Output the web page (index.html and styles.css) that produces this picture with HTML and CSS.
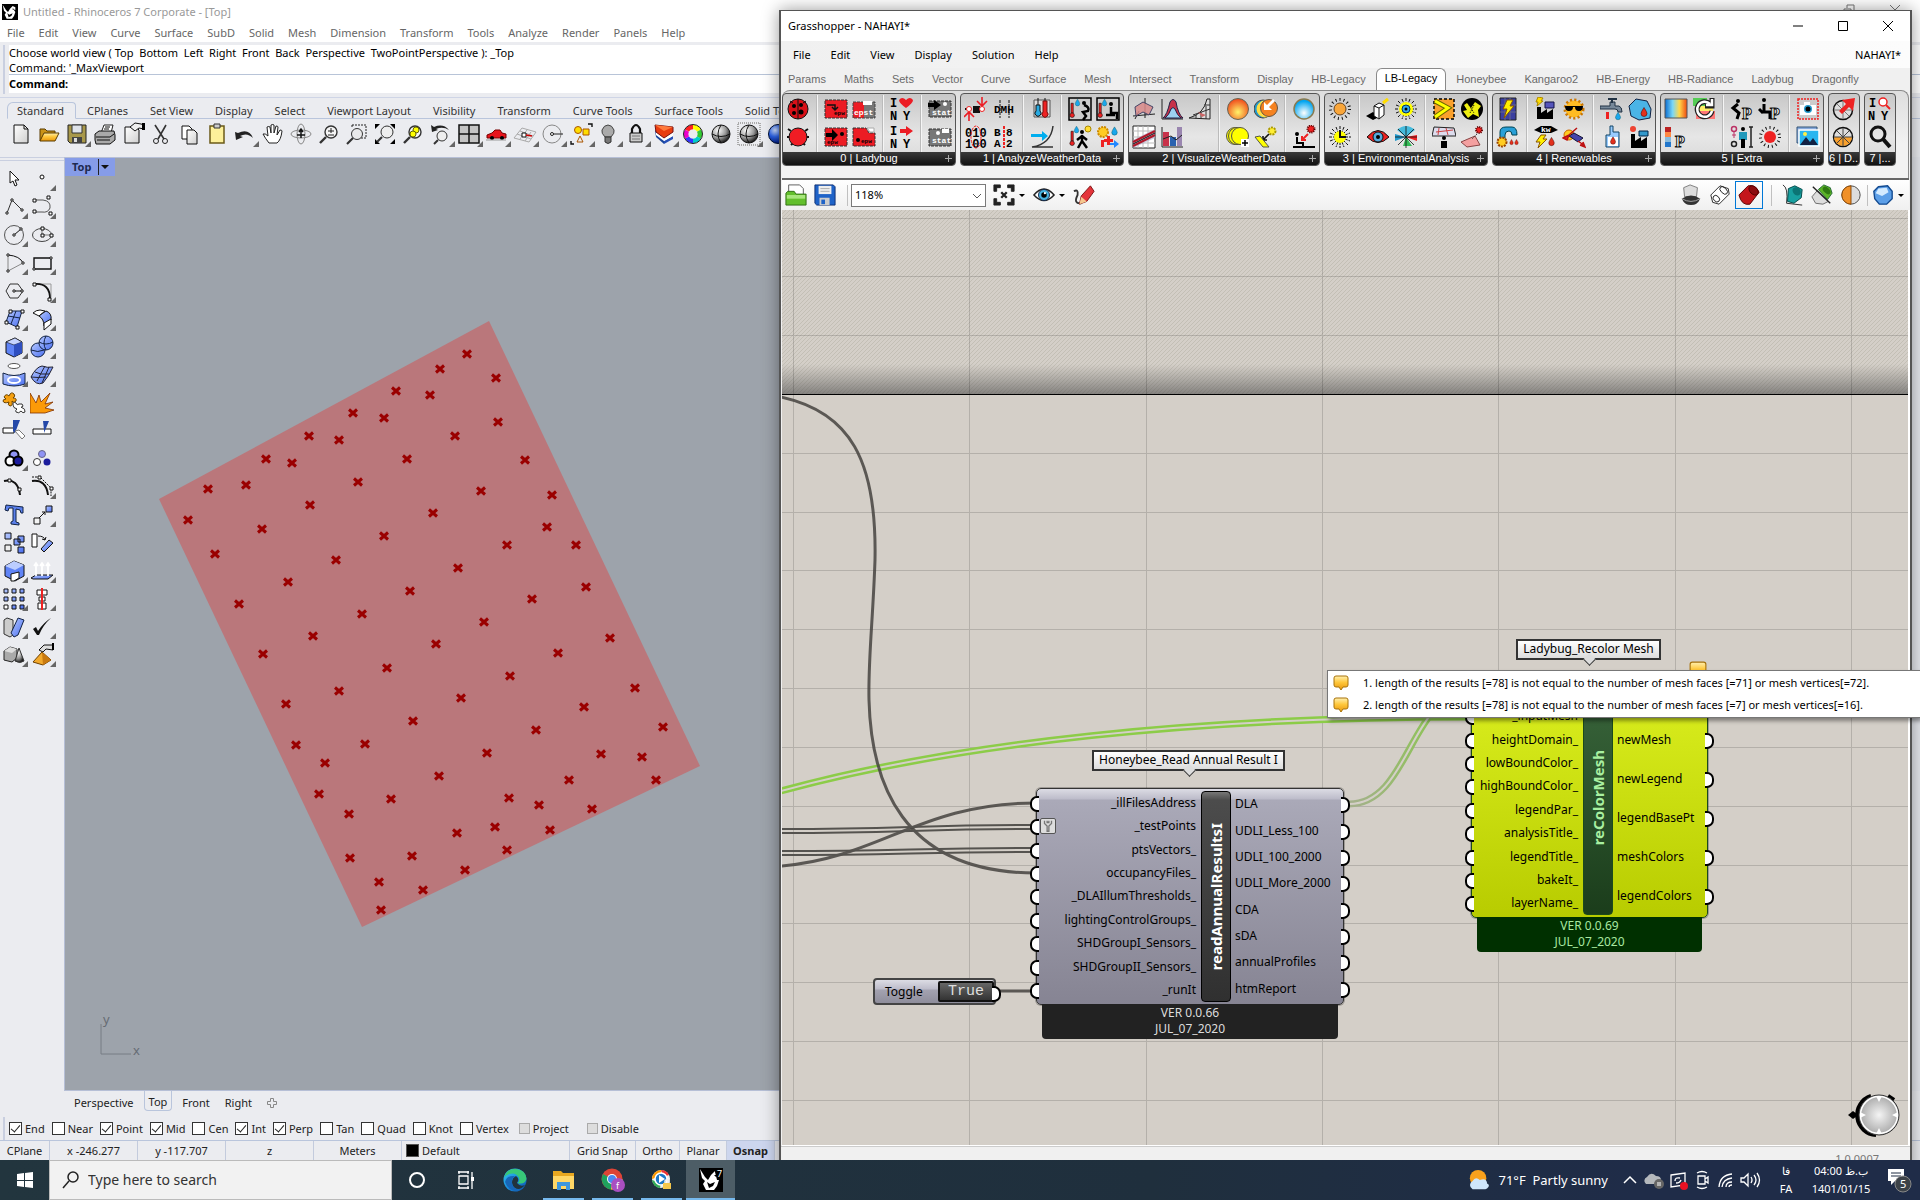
FILE: index.html
```html
<!DOCTYPE html>
<html lang="en">
<head>
<meta charset="utf-8">
<title>Untitled - Rhinoceros 7 Corporate - [Top]</title>
<link rel="stylesheet" href="styles.css">
</head>
<body>
<svg class="defs" aria-hidden="true">
  <defs>
    <linearGradient id="blue" x1="0" y1="0" x2="1" y2="1"><stop offset="0" stop-color="#b5c8ff"/><stop offset="1" stop-color="#4a6ff0"/></linearGradient>
    <linearGradient id="gold" x1="0" y1="0" x2="0" y2="1"><stop offset="0" stop-color="#fff0b0"/><stop offset=".45" stop-color="#ffc83c"/><stop offset="1" stop-color="#e8960c"/></linearGradient>
    <linearGradient id="paper" x1="0" y1="0" x2="1" y2="1"><stop offset="0" stop-color="#fff"/><stop offset="1" stop-color="#cfcfcf"/></linearGradient>
    <radialGradient id="gball" cx=".35" cy=".3" r=".7"><stop offset="0" stop-color="#fff"/><stop offset=".6" stop-color="#999"/><stop offset="1" stop-color="#222"/></radialGradient>
    <radialGradient id="bball" cx=".35" cy=".3" r=".7"><stop offset="0" stop-color="#cfe0ff"/><stop offset=".5" stop-color="#2c63e8"/><stop offset="1" stop-color="#001a80"/></radialGradient>
    <radialGradient id="knob"><stop offset="0" stop-color="#f4f4f4"/><stop offset="1" stop-color="#a8a8a8"/></radialGradient>
    <radialGradient id="hot" cx=".5" cy=".65" r=".6"><stop offset="0" stop-color="#fff46a"/><stop offset="1" stop-color="#f0501e"/></radialGradient>
    <radialGradient id="cool" cx=".5" cy=".7" r=".6"><stop offset="0" stop-color="#fff"/><stop offset="1" stop-color="#00a4f0"/></radialGradient>
    <linearGradient id="rain"><stop offset="0" stop-color="#0a6cd0"/><stop offset=".35" stop-color="#7ad8f8"/><stop offset=".65" stop-color="#ffd84a"/><stop offset="1" stop-color="#f04a10"/></linearGradient>
    <linearGradient id="edge" x1="0" y1="0" x2="1" y2="1"><stop offset="0" stop-color="#36c5f0"/><stop offset=".5" stop-color="#1a8fe0"/><stop offset="1" stop-color="#0c4fa8"/></linearGradient>
    <pattern id="hatch" width="4" height="4" patternUnits="userSpaceOnUse"><path d="M-1 1l2-2M0 4l4-4M3 5l2-2" stroke="#c3bfb5" stroke-width="1"/></pattern>
    <linearGradient id="shade" x1="0" y1="0" x2="0" y2="1"><stop offset="0" stop-color="#555" stop-opacity="0"/><stop offset="1" stop-color="#444" stop-opacity=".55"/></linearGradient>
    <linearGradient id="fade"><stop offset="0" stop-color="#a5b08e"/><stop offset="1" stop-color="#82cc3c"/></linearGradient>
    <marker id="x" viewBox="-5 -5 10 10" markerWidth="10" markerHeight="10" markerUnits="userSpaceOnUse"><path d="M-4-3.500L4 3.500M4-3.500L-4 3.500" stroke="#9a0000" stroke-width="3"/></marker>
    <symbol id="ball" viewBox="0 0 24 24"><circle cx="12" cy="12" r="9" fill="url(#gball)" stroke="#111"/><path d="M3 12q9 5 18 0M12 3q-6 9 0 18" fill="none" stroke="#111"/></symbol>
    <symbol id="lens" viewBox="0 0 24 24"><circle cx="14" cy="10" r="6" fill="#f5f5f5" stroke="#333" stroke-width="1.4"/><path d="M9 15l-6 6" stroke="#333" stroke-width="2.4"/></symbol>
    <symbol id="sun" viewBox="0 0 24 24"><path d="M12 1v22M1 12h22M4 4l16 16M20 4L4 20M8 2l8 20M16 2L8 22M2 8l20 8M2 16l20-8" stroke="#111" stroke-width="1" stroke-dasharray="3 1"/></symbol>
    <symbol id="note" viewBox="0 0 16 16"><path d="M3 1h10q2 0 2 2v7q0 2-2 2h-3l-2 3-2-3H3q-2 0-2-2V3q0-2 2-2z" fill="url(#gold)" stroke="#a8730a"/></symbol>
    <symbol id="drop" viewBox="0 0 24 24"><path d="M12 3q6 9 6 12a6 6 0 0 1-12 0q0-3 6-12z" fill="#1aa7ec" stroke="#056"/></symbol>
    <symbol id="flame" viewBox="0 0 24 24"><path d="M12 3q6 9 6 12a6 6 0 0 1-12 0q0-3 6-12z" fill="#e2301c" stroke="#300"/></symbol>
    <symbol id="therm" viewBox="0 0 8 24"><path d="M2 3h3v13h-3z" fill="#e22" stroke="#111" stroke-width=".8"/><circle cx="3.500" cy="19" r="3" fill="#e22" stroke="#111" stroke-width=".8"/></symbol>
    <symbol id="logo" viewBox="0 0 24 24"><path d="M0 0h24v24H0z" fill="#000"/><path d="M1 1l2 9 3 3-2 3 3 6 8 0 3-4 2-6-3-4 3 1 0-4-4-2-4 4-3 5-3-3z" fill="#fff"/><path d="M8 14l3 2 5-2-2 4-4 2zM15 7l3 0-1 2z" fill="#000"/></symbol>
  </defs>
</svg>

<main class="desktop">
<section class="rhino">
  <header class="r-title"><svg class="i16"><use href="#logo"/></svg><span>Untitled - Rhinoceros 7 Corporate - [Top]</span>
    <svg class="r-ctl" viewBox="0 0 110 16"><path d="M6 7h10M51 5h7v8h-7zM54 4V1h7v8h-3M97 1l10 10M107 1L97 11" fill="none" stroke="#777"/></svg>
  </header>
  <nav class="r-menu"><button>File</button><button>Edit</button><button>View</button><button>Curve</button><button>Surface</button><button>SubD</button><button>Solid</button><button>Mesh</button><button>Dimension</button><button>Transform</button><button>Tools</button><button>Analyze</button><button>Render</button><button>Panels</button><button>Help</button></nav>
  <div class="r-cmd">
    <pre>Choose world view ( Top  Bottom  Left  Right  Front  Back  Perspective  TwoPointPerspective ): _Top
Command: '_MaxViewport</pre>
    <div class="r-prompt"><label for="cmd">Command:</label><input id="cmd" type="text"></div>
  </div>
  <div class="r-bar">
    <div class="r-tabs"><button class="on">Standard</button><button>CPlanes</button><button>Set View</button><button>Display</button><button>Select</button><button>Viewport Layout</button><button>Visibility</button><button>Transform</button><button>Curve Tools</button><button>Surface Tools</button><button>Solid Tools</button></div>
    <div class="r-tools">
      <button aria-label="New"><svg viewBox="0 0 24 24"><path d="M5 3h10l4 4v14H5z" fill="url(#paper)" stroke="#111"/><path d="M15 3v4h4" fill="none" stroke="#111"/></svg></button>
      <button aria-label="Open"><svg viewBox="0 0 24 24"><path d="M3 19V7h5l2 2h8v3" fill="#c99318" stroke="#5a3c00"/><path d="M3 19l4-8h15l-4 8z" fill="url(#gold)" stroke="#5a3c00"/></svg></button>
      <button class="d" aria-label="Save"><svg viewBox="0 0 24 24"><path d="M3 3h18v18H5l-2-2z" fill="#a8984a" stroke="#222"/><path d="M7 3h10v8H7z" fill="#dfe3ea" stroke="#333"/><path d="M7 15h10v6H7z" fill="#444"/><path d="M9 16h3v4H9z" fill="#ddd"/></svg></button>
      <button aria-label="Print"><svg viewBox="0 0 24 24"><path d="M8 11l3-8h9l-2 8z" fill="#fff" stroke="#222"/><path d="M2 12l4-3h15l1 4v5l-5 4H3l-1-4z" fill="#aaa" stroke="#111"/><path d="M3 15h14l4-3M4 18h13M12 5h5M11 7h5" fill="none" stroke="#111"/></svg></button>
      <button aria-label="Properties"><svg viewBox="0 0 24 24"><path d="M4 5h11l3 3v13H4z" fill="url(#paper)" stroke="#111"/><path d="M9 5l5-4 6 1 3 1v4l-5-1-4 3z" fill="#eee" stroke="#111"/><path d="M21 1h3v7h-3z"/></svg></button>
      <button aria-label="Cut"><svg viewBox="0 0 24 24"><path d="M6 3l9 14M17 3L9 17" stroke="#333" stroke-width="1.600"/><circle cx="7" cy="19" r="2.500" fill="none" stroke="#222"/><circle cx="16" cy="19" r="2.500" fill="none" stroke="#222"/></svg></button>
      <button aria-label="Copy"><svg viewBox="0 0 24 24"><path d="M5 4h7l3 3v10H5z" fill="#fff" stroke="#111"/><path d="M10 8h7l3 3v11H10z" fill="url(#paper)" stroke="#111"/></svg></button>
      <button aria-label="Paste"><svg viewBox="0 0 24 24"><path d="M5 4h14v17H5z" fill="#fdf09a" stroke="#6b5a18" stroke-width="1.500"/><path d="M9 2h6v4H9z" fill="#ccc" stroke="#333"/></svg></button>
      <button class="d" aria-label="Undo"><svg viewBox="0 0 24 24"><path d="M2 10l1 8 7-3-3-1q7-4 13 2Q16 6 5 11z" fill="#222"/></svg></button>
      <button aria-label="Pan"><svg viewBox="0 0 24 24"><path d="M8 21q-4-5-6-9 2-1 5 2L6 5q2-1 3 0l1 6V3q2-1 3 0v8l2-7q2 0 2 1l-1 8 3-5q2 0 2 1-1 9-5 12z" fill="#fff" stroke="#222"/></svg></button>
      <button aria-label="Rotate view"><svg viewBox="0 0 24 24"><ellipse cx="12" cy="12" rx="10" ry="4" fill="none" stroke="#888"/><ellipse cx="12" cy="12" rx="4" ry="10" fill="none" stroke="#888"/><path d="M12 8v8M8 13h8M10 10l2-3 2 3" fill="none" stroke="#111" stroke-width="1.500"/></svg></button>
      <button aria-label="Zoom dynamic"><svg viewBox="0 0 24 24"><use href="#lens"/><path d="M11 9h6M14 6v5M11 13h6" stroke="#222"/></svg></button>
      <button aria-label="Zoom window"><svg viewBox="0 0 24 24"><path d="M7 3h14v13h-5M7 3v3" fill="none" stroke="#222" stroke-dasharray="2 1"/><circle cx="12" cy="12" r="5.500" fill="#e9e9ea" stroke="#333"/><path d="M8 16l-6 6" stroke="#333" stroke-width="2.200"/></svg></button>
      <button aria-label="Zoom extents"><svg viewBox="0 0 24 24"><path d="M2 2h5L2 7zM22 2h-5l5 5zM2 22h5l-5-5zM22 22h-5l5-5z"/><circle cx="14" cy="10" r="6" fill="#eee" stroke="#333"/><path d="M9 15l-5 5" stroke="#333" stroke-width="2.200"/></svg></button>
      <button aria-label="Zoom selected"><svg viewBox="0 0 24 24"><use href="#lens"/><circle cx="15" cy="8" r="3" fill="#ff0" stroke="#660"/><circle cx="12" cy="12" r="3" fill="#ff0" stroke="#660"/></svg></button>
      <button class="d" aria-label="Undo view"><svg viewBox="0 0 24 24"><path d="M2 3l1 7 6-2-2-1q7-3 13 1Q14 1 5 5z" fill="#222"/><circle cx="13" cy="14" r="5" fill="#eee" stroke="#333"/><path d="M9 18l-4 4" stroke="#333" stroke-width="2"/></svg></button>
      <button class="d" aria-label="Four viewports"><svg viewBox="0 0 24 24"><path d="M2 3h20v18H2z" fill="#c4c4c4" stroke="#111" stroke-width="1.500"/><path d="M12 3v18M2 12h20" stroke="#111" stroke-width="1.500"/></svg></button>
      <button class="d" aria-label="Named view"><svg viewBox="0 0 24 24"><path d="M2 13l5-2 3-3h5l2 3 4 1v4H2z" fill="#e8141c" stroke="#700"/><circle cx="7" cy="16" r="2"/><circle cx="17" cy="16" r="2"/><path d="M1 18h20" stroke="#999"/></svg></button>
      <button class="d" aria-label="CPlane"><svg viewBox="0 0 24 24"><path d="M1 16L9 6l14 4-7 10zM4 12l14 5M7 9l13 5M7 17l7-9M12 19l6-9" fill="none" stroke="#aaa"/><path d="M9 11h4v4H9z" stroke="#111" fill="#fff"/><path d="M13 13l6 1" stroke="#c00" stroke-width="1.500"/></svg></button>
      <button class="d" aria-label="Osnap"><svg viewBox="0 0 24 24"><circle cx="11" cy="12" r="9" fill="none" stroke="#888"/><circle cx="11" cy="12" r="1.500" fill="#fff" stroke="#222"/><path d="M12 12h10" stroke="#222"/></svg></button>
      <button class="d" aria-label="Select"><svg viewBox="0 0 24 24"><circle cx="9" cy="8" r="3.500" fill="#fd0" stroke="#a50"/><path d="M14 7h6v6h-6z" fill="#fd0" stroke="#a50"/><path d="M11 14l3 6H8z" fill="#eee" stroke="#a50"/><path d="M19 2h4v3M5 22H2v-3" fill="none" stroke="#111" stroke-width="1.400"/></svg></button>
      <button class="d" aria-label="Hide"><svg viewBox="0 0 24 24"><path d="M8 15q-4-4-3-7 2-5 6-5t6 5q1 3-3 7z" fill="#aaa" stroke="#444"/><path d="M8 15h6v5q-3 3-6 0z" fill="#777" stroke="#333"/></svg></button>
      <button class="d" aria-label="Lock"><svg viewBox="0 0 24 24"><path d="M7 11V7q4-8 8 0v4" fill="none" stroke="#111" stroke-width="2.200"/><path d="M5 11h12v9H5z" fill="#ccc" stroke="#111"/><path d="M7 14h8M7 17h8" stroke="#777"/></svg></button>
      <button class="d" aria-label="Layers"><svg viewBox="0 0 24 24"><path d="M2 8l9 4v10L3 15z" fill="#19469c"/><path d="M11 19l9-5v3l-9 5z" fill="#2750b8"/><path d="M3 10l8 5 9-4v3l-9 5-8-6z" fill="#fff"/><path d="M2 3l18 2v5l-9 6-8-6z" fill="#e83c10" stroke="#711"/><path d="M2 3l18 2-9 4z" fill="#ff7a3c"/></svg></button>
      <button class="d" aria-label="Colour"><svg viewBox="0 0 24 24"><g fill="none" stroke-width="4.500"><path d="M12 5a7 7 0 0 1 6 3.500" stroke="#ff0"/><path d="M18 8.500a7 7 0 0 1 0 7" stroke="#3c3"/><path d="M18 15.500a7 7 0 0 1-6 3.500" stroke="#0cc"/><path d="M12 19a7 7 0 0 1-6-3.500" stroke="#33f"/><path d="M6 15.500a7 7 0 0 1 0-7" stroke="#e0c"/><path d="M6 8.500A7 7 0 0 1 12 5" stroke="#f22"/></g><circle cx="12" cy="12" r="9.500" fill="none" stroke="#222"/></svg></button>
      <button aria-label="Shaded"><svg viewBox="0 0 24 24"><use href="#ball"/></svg></button>
      <button class="d" aria-label="Shade options"><svg viewBox="0 0 24 24"><path d="M1 1h22v22H1z" fill="none" stroke="#aaa" stroke-width="2" stroke-dasharray="1 1"/><use href="#ball"/></svg></button>
      <button aria-label="Rendered"><svg viewBox="0 0 24 24"><circle cx="13" cy="12" r="9.500" fill="url(#bball)" stroke="#013"/></svg></button>
    </div>
  </div>
  <div class="r-body">
    <aside class="r-side">
      <button aria-label="Pointer"><svg viewBox="0 0 24 24"><path d="M8 4v12l3-2 2 5 2-1-2-5h4z" fill="#fff" stroke="#111"/></svg></button>
      <button class="d" aria-label="Point"><svg viewBox="0 0 24 24"><circle cx="12" cy="10" r="2" fill="#fff" stroke="#111"/></svg></button>
      <button class="d" aria-label="Polyline"><svg viewBox="0 0 24 24"><path d="M5 18L10 5l10 10" fill="none" stroke="#333"/><g fill="#fff" stroke="#111"><circle cx="5" cy="18" r="1.200"/><circle cx="10" cy="5" r="1.200"/><circle cx="20" cy="15" r="1.200"/></g></svg></button>
      <button class="d" aria-label="Curve"><svg viewBox="0 0 24 24"><path d="M4 5h9q8 1 7 8-2 5-8 4H4" fill="none" stroke="#555"/><path d="M3 4h3v3H3zM3 15h3v3H3zM17 1h3v3h-3zM19 17h3v3h-3z" fill="#fff" stroke="#111"/></svg></button>
      <button class="d" aria-label="Circle"><svg viewBox="0 0 24 24"><circle cx="12" cy="12" r="9.500" fill="none" stroke="#555"/><path d="M12 12l7-6" stroke="#111"/><circle cx="12" cy="12" r="1.200" fill="#fff" stroke="#111"/><circle cx="19" cy="6" r="1.200" fill="#fff" stroke="#111"/></svg></button>
      <button class="d" aria-label="Ellipse"><svg viewBox="0 0 24 24"><ellipse cx="12" cy="12" rx="9.500" ry="6.500" fill="none" stroke="#444"/><path d="M12 6v6h9" fill="none" stroke="#777"/><path d="M11 4h3v3h-3zM11 11h3v3h-3zM20 11h3v3h-3z" fill="#fff" stroke="#111"/></svg></button>
      <button class="d" aria-label="Arc"><svg viewBox="0 0 24 24"><path d="M6 4q12 1 15 8" fill="none" stroke="#111"/><path d="M6 4v16l15-8" fill="none" stroke="#888"/><g fill="#fff" stroke="#111"><circle cx="6" cy="4" r="1.200"/><circle cx="6" cy="20" r="1.200"/><circle cx="21" cy="12" r="1.200"/></g></svg></button>
      <button class="d" aria-label="Rectangle"><svg viewBox="0 0 24 24"><path d="M4 7h17v11H4z" fill="none" stroke="#111" stroke-width="1.400"/><circle cx="21" cy="7" r="1.200" fill="#fff" stroke="#111"/><circle cx="4" cy="18" r="1.200" fill="#fff" stroke="#111"/></svg></button>
      <button class="d" aria-label="Polygon"><svg viewBox="0 0 24 24"><path d="M8 5h8l5 7-5 7H8l-4-7z" fill="none" stroke="#333"/><path d="M12 12h8" stroke="#111"/><circle cx="12" cy="12" r="1.200" fill="#fff" stroke="#111"/><circle cx="20" cy="12" r="1.200" fill="#fff" stroke="#111"/></svg></button>
      <button class="d" aria-label="Fillet"><svg viewBox="0 0 24 24"><path d="M5 5h16v14" fill="none" stroke="#999"/><path d="M5 5q15-1 15 15" fill="none" stroke="#111" stroke-width="1.800"/><path d="M3 4h3v3H3zM18 19h3v3h-3z" fill="#fff" stroke="#111"/></svg></button>
      <button class="d" aria-label="Surface from points"><svg viewBox="0 0 24 24"><path d="M8 4h12l-5 16L4 15z" fill="url(#blue)" stroke="#124"/><path d="M6 9l12 2M14 4l-5 13" stroke="#124"/><path d="M7 3h3v3H7zM19 3h3v3h-3zM3 14h3v3H3zM14 19h3v3h-3z" fill="#fff" stroke="#111"/></svg></button>
      <button class="d" aria-label="Surface"><svg viewBox="0 0 24 24"><path d="M3 6q3-3 7-3l5 1-6 5z" fill="#fff" stroke="#111"/><path d="M9 9q4-3 7-5 6 2 5 9l-7 6q0-7-5-10z" fill="url(#blue)" stroke="#111"/><path d="M14 16l7-4v5l-7 6z" fill="#fff" stroke="#111"/></svg></button>
      <button class="d" aria-label="Box"><svg viewBox="0 0 24 24"><path d="M4 7l9-4 7 4v11l-8 4-8-4z" fill="#5f83f5" stroke="#111"/><path d="M4 7l9-4 7 4-8 3z" fill="#c6d4ff" stroke="#111" stroke-width=".6"/><path d="M12 10l8-3v11l-8 4z" fill="#2f4fc0"/></svg></button>
      <button class="d" aria-label="Boolean"><svg viewBox="0 0 24 24"><circle cx="8" cy="15" r="7" fill="url(#blue)" stroke="#124"/><circle cx="16" cy="8" r="7" fill="url(#blue)" stroke="#124"/><path d="M9 7q7 4 14 0M16 1q-4 7 0 14M1 15q7 3 13 0" fill="none" stroke="#124"/></svg></button>
      <button class="d" aria-label="Project"><svg viewBox="0 0 24 24"><ellipse cx="12" cy="3" rx="6" ry="2.500" fill="#fff" stroke="#555"/><path d="M1 10q11 5 22 0v11q-11 4-22 0z" fill="url(#blue)" stroke="#124"/><ellipse cx="12" cy="17" rx="6" ry="3" fill="none" stroke="#fff" stroke-width="2"/></svg></button>
      <button class="d" aria-label="Mesh"><svg viewBox="0 0 24 24"><path d="M1 14Q6 4 12 3q5 2 11 1-4 9-10 16-7 3-12-6z" fill="url(#blue)" stroke="#223"/><path d="M5 9q5 3 14 2M7 18q4-8 8-15M12 20l7-16M1 14q7 1 15 0" fill="none" stroke="#223"/></svg></button>
      <button aria-label="Join"><svg viewBox="0 0 24 24"><path d="M2 6q2-4 5-1 2-5 5-2 2 2-1 4 4 0 3 3-2 3-4 0 1 5-2 5-3-1-1-4-5 2-6-1 0-2 3-2z" fill="#f5a010" stroke="#6b4300"/><path d="M11 14q0-4 3-2 1 3 3 1 4-1 4 2-1 2-2 1 5 2 4 5-2 2-4-1-2 3-5 1-1-2 1-3-4-1-4-4z" fill="#fff" stroke="#333"/></svg></button>
      <button aria-label="Explode"><svg viewBox="0 0 24 24"><path d="M0 22V2l6 10 3-8 2 7 9-9-5 11 8-2-8 6 9 2-9 3z" fill="#fb9a08" stroke="#803000" stroke-width=".8"/></svg></button>
      <button aria-label="Trim"><svg viewBox="0 0 24 24"><path d="M1 9h11v5H1z" fill="#fff" stroke="#111"/><path d="M11 1h7l-5 13-2-2z" fill="#2448a8"/><path d="M13 12l7 8 3-3-6-6z" fill="#fff" stroke="#777"/></svg></button>
      <button aria-label="Split"><svg viewBox="0 0 24 24"><path d="M3 10h18v5H3z" fill="#fff" stroke="#111"/><path d="M13 2h6l-5 12v-3z" fill="#2448a8"/></svg></button>
      <button class="d" aria-label="Group"><svg viewBox="0 0 24 24"><g stroke="#000" stroke-width="2"><circle cx="12" cy="8" r="4.500" fill="#8f93f5"/><circle cx="8" cy="14" r="4.500" fill="#fff"/><circle cx="16" cy="14" r="4.500" fill="#1c1c9c"/></g></svg></button>
      <button aria-label="Ungroup"><svg viewBox="0 0 24 24"><circle cx="12" cy="7" r="3.500" fill="#8f93f5" stroke="#668"/><circle cx="7" cy="15" r="3.500" fill="#fff" stroke="#333"/><circle cx="17" cy="15" r="3.500" fill="#1c1c9c"/></svg></button>
      <button aria-label="Edit points"><svg viewBox="0 0 24 24"><path d="M2 6q14-3 16 14" fill="none" stroke="#111" stroke-width="2"/><path d="M6 4h3v3H6zM16 13h3v3h-3z" fill="#fff" stroke="#111"/></svg></button>
      <button class="d" aria-label="Control points"><svg viewBox="0 0 24 24"><path d="M2 6q14-2 16 14" fill="none" stroke="#111" stroke-width="2"/><path d="M2 2h8l11 11v8" fill="none" stroke="#111" stroke-dasharray="2 1"/><path d="M8 1h3v3H8zM20 12h3v3h-3z" fill="#fff" stroke="#111"/></svg></button>
      <button aria-label="Text"><svg viewBox="0 0 24 24"><path d="M4 2l17 2 0 6h-2l-1-3-4-1v13l3 1v2l-8-1v-2l2-1V5H7L6 8 3 7z" fill="#5b80ec" stroke="#124"/></svg></button>
      <button class="d" aria-label="Move"><svg viewBox="0 0 24 24"><path d="M16 3h6v6h-6z" fill="url(#blue)" stroke="#111"/><path d="M4 15h6v6H4z" fill="#f4f4f4" stroke="#111"/><path d="M9 15l6-6M12 9h3v3" fill="none" stroke="#111"/></svg></button>
      <button aria-label="Copy objects"><svg viewBox="0 0 24 24"><g fill="url(#blue)" stroke="#111"><path d="M3 2h6v6H3zM16 5h6v6h-6zM12 8h6v6h-6zM16 16h6v6h-6z"/></g><path d="M3 14h6v6H3z" fill="#eee" stroke="#111"/></svg></button>
      <button aria-label="Rotate"><svg viewBox="0 0 24 24"><path d="M2 3h5v13H2z" fill="#fff" stroke="#111"/><path d="M11 18l8-9 4 3-9 9z" fill="url(#blue)" stroke="#111"/><path d="M8 5q6 0 7 4M12 8l3 1 1-3" fill="none" stroke="#111"/></svg></button>
      <button class="d" aria-label="Solid edit"><svg viewBox="0 0 24 24"><path d="M3 7l9-5 10 4v11l-9 5-10-5z" fill="#5f83f5" stroke="#111"/><path d="M3 7l9-5 10 4-9 5z" fill="#bccdff"/><path d="M9 22v-7l8-2v6l-5 3z" fill="#fff" stroke="#111"/></svg></button>
      <button class="d" aria-label="Analyze direction"><svg viewBox="0 0 24 24"><path d="M1 19l5-3h17l-5 4H3z" fill="url(#blue)" stroke="#111"/><path d="M6 17V6M12 17V6M18 17V6M4 7l2-3 2 3M10 7l2-3 2 3M16 7l2-3 2 3" fill="none" stroke="#fff" stroke-width="1.800"/></svg></button>
      <button class="d" aria-label="Array"><svg viewBox="0 0 24 24"><g fill="url(#blue)" stroke="#111"><path d="M2 2h4v4H2zM10 2h4v4h-4zM18 2h4v4h-4zM2 10h4v4H2zM10 10h4v4h-4zM18 10h4v4h-4zM10 18h4v4h-4zM18 18h4v4h-4z"/></g><path d="M2 18h4v4H2z" fill="#fff" stroke="#111"/></svg></button>
      <button class="d" aria-label="Align"><svg viewBox="0 0 24 24"><path d="M7 3h10v5H7zM9 10h6v4H9zM8 16h8v6H8z" fill="#fff" stroke="#111"/><path d="M12 1v22" stroke="#e22" stroke-width="2"/></svg></button>
      <button class="d" aria-label="Flow"><svg viewBox="0 0 24 24"><path d="M2 5l3-2 6 2v15l-3 2-6-3z" fill="#ccc" stroke="#333"/><path d="M9 18l7-15 6 2-6 15-4 2z" fill="url(#blue)" stroke="#124"/></svg></button>
      <button class="d" aria-label="Check"><svg viewBox="0 0 24 24"><path d="M3 14l3-2 2 4Q14 7 21 3 13 10 9 20H7z" fill="#111"/></svg></button>
      <button class="d" aria-label="Solids"><svg viewBox="0 0 24 24"><path d="M2 8l6-4 7 2v9l-5 4-8-2z" fill="#aaa" stroke="#222"/><path d="M2 8l6-4 7 2-5 4z" fill="#ddd"/><path d="M17 5l5 13q-4 3-9 0z" fill="url(#gball)" stroke="#333"/></svg></button>
      <button class="d" aria-label="Render solid"><svg viewBox="0 0 24 24"><path d="M12 9l9 8-8 5-10-3z" fill="#f2a92c" stroke="#704000"/><path d="M12 9l9 8-8 5z" fill="#c97a10"/><path d="M9 7l5-5 9 0v5l-7-1-3 3z" fill="#ddd" stroke="#111"/><path d="M22 0h2v7h-2z"/></svg></button>
    </aside>
    <div class="r-view">
      <svg class="fill"><g transform="translate(-65 -158)">
        <path d="M159 499L489 321L700 766L362 927z" fill="#ba777b"/>
        <path fill="none" marker-start="url(#x)" marker-mid="url(#x)" marker-end="url(#x)" d="M467 354L440 369 496 378 396 391 430 395 353 413 384 418 498 422 455 436 309 436 339 440 266 459 292 463 407 459 525 460 358 482 481 491 552 495 246 485 208 489 310 505 433 513 547 527 188 520 262 529 384 536 507 545 576 545 215 554 336 560 458 568 288 582 586 587 410 591 532 599 239 604 362 614 484 622 313 636 610 638 436 644 558 653 263 654 387 668 510 676 635 688 339 691 461 698 286 704 584 707 413 721 663 727 536 730 365 744 296 745 487 753 601 754 642 757 325 763 439 776 656 780 569 780 319 794 509 798 391 799 539 805 592 809 349 814 495 827 550 830 457 833 507 850 412 856 350 858 465 870 379 882 423 890 381 910"/>
        <path d="M101 1024v30h30" fill="none" stroke="#777d84"/>
        <text x="103" y="1024" class="axis">y</text><text x="133" y="1055" class="axis">x</text></g></svg>
      <button class="r-vp"><span>Top</span><i></i></button>
    </div>
    <aside class="r-dock"></aside>
  </div>
  <div class="r-vtabs"><button>Perspective</button><button class="on">Top</button><button>Front</button><button>Right</button><button aria-label="Add"><svg width="10" height="10" viewBox="0 0 10 10"><path d="M3.500.500h3v3h3v3h-3v3h-3v-3h-3v-3h3z" fill="none" stroke="#888"/></svg></button></div>
  <div class="r-snap">
    <label><input type="checkbox" checked>End</label><label><input type="checkbox">Near</label><label><input type="checkbox" checked>Point</label><label><input type="checkbox" checked>Mid</label><label><input type="checkbox">Cen</label><label><input type="checkbox" checked>Int</label><label><input type="checkbox" checked>Perp</label><label><input type="checkbox">Tan</label><label><input type="checkbox">Quad</label><label><input type="checkbox">Knot</label><label><input type="checkbox">Vertex</label><label class="off"><input type="checkbox" disabled>Project</label><label class="off"><input type="checkbox" disabled>Disable</label>
  </div>
  <div class="r-status"><span class="w49">CPlane</span><span>x -246.277</span><span>y -117.707</span><span>z</span><span>Meters</span><span class="layer"><i></i>Default</span><span class="w66">Grid Snap</span><span class="w44">Ortho</span><span class="w47">Planar</span><span class="w48 on">Osnap</span></div>
</section>

<section class="gh">
  <header class="g-title"><span>Grasshopper - NAHAYI*</span><div class="g-win"><button aria-label="Minimize"><svg width="12" height="12"><path d="M1 6h10" stroke="#000"/></svg></button><button aria-label="Maximize"><svg width="12" height="12"><path d="M1.500 1.500h9v9h-9z" fill="none" stroke="#000"/></svg></button><button aria-label="Close"><svg width="12" height="12"><path d="M1 1l10 10M11 1L1 11" stroke="#000"/></svg></button></div></header>
  <nav class="g-menu"><button>File</button><button>Edit</button><button>View</button><button>Display</button><button>Solution</button><button>Help</button><b>NAHAYI*</b></nav>
  <div class="g-tabs"><button>Params</button><button>Maths</button><button>Sets</button><button>Vector</button><button>Curve</button><button>Surface</button><button>Mesh</button><button>Intersect</button><button>Transform</button><button>Display</button><button>HB-Legacy</button><button class="on">LB-Legacy</button><button>Honeybee</button><button>Kangaroo2</button><button>HB-Energy</button><button>HB-Radiance</button><button>Ladybug</button><button>Dragonfly</button></div>
  <div class="g-ribbon">
    <div class="pn"><div class="ics">
      <div><button aria-label="Ladybug"><svg viewBox="0 0 24 24"><circle cx="12" cy="12" r="10" fill="#d81018" stroke="#111"/><circle cx="8" cy="9" r="2"/><circle cx="15" cy="8" r="2"/><circle cx="8" cy="16" r="2"/><circle cx="15" cy="15" r="2.500"/><path d="M12 2v20M4 4l3 2M20 4l-3 2" stroke="#111"/></svg></button><button aria-label="Ladybug flying"><svg viewBox="0 0 24 24"><path d="M2 4l3 2M22 4l-3 2M1 12h3M20 12h3M5 20l2-2M19 20l-2-2" stroke="#111" stroke-width="2"/><circle cx="12" cy="12" r="9" fill="#f01c24" stroke="#111"/></svg></button></div><hr>
      <div><button aria-label="Import epw"><svg viewBox="0 0 24 24"><path d="M1 3h22v18H1z" fill="#ec1c24" stroke="#333" stroke-dasharray="3 1"/><path d="M3 8h8v5M8 10l3 3 3-3" fill="none" stroke="#111" stroke-width="1.500"/><text x="10" y="18" class="m6">epw</text></svg></button><button aria-label="Open epw"><svg viewBox="0 0 24 24"><path d="M1 3h22v18H1z" fill="#ec1c24" stroke="#333" stroke-dasharray="3 1"/><path d="M2 8h6V4l6 6-6 6v-4H2z"/><circle cx="18" cy="9" r="2"/><text x="3" y="19" class="m6">epw</text></svg></button></div>
      <div><button aria-label="Epw stat"><svg viewBox="0 0 24 24"><path d="M1 5h11v16H1z" fill="#ec1c24"/><path d="M12 5h11v16H12z" fill="#777"/><path d="M1 5h22v16H1z" fill="none" stroke="#444" stroke-dasharray="3 1"/><path d="M11 4h9v4h-9z" fill="#fff"/><text x="2" y="18" class="m8 wt">epst</text></svg></button><button aria-label="Epw folder"><svg viewBox="0 0 24 24"><path d="M1 3h13l3 5h6v13H1z" fill="#ec1c24" stroke="#333" stroke-dasharray="3 1"/><path d="M15 3h7v4h-4z" fill="#fff" stroke="#aaa"/><circle cx="6" cy="15" r="2"/><text x="9" y="18" class="m6">epw</text></svg></button></div><hr>
      <div><button aria-label="Location"><svg viewBox="0 0 24 24"><text x="0" y="10" class="m12">I</text><path d="M16 11q-7-5-7-8 3-4 7 0 4-4 7 0 0 3-7 8z" fill="#ec1c24"/><text x="0" y="23" class="m12">N</text><text x="13" y="23" class="m12">Y</text></svg></button><button aria-label="Set location"><svg viewBox="0 0 24 24"><text x="0" y="10" class="m12">I</text><path d="M10 4h6V1l7 5-7 5V8h-6z" fill="#ec1c24"/><text x="0" y="23" class="m12">N</text><text x="13" y="23" class="m12">Y</text></svg></button></div><hr>
      <div><button aria-label="Import stat"><svg viewBox="0 0 24 24"><path d="M1 4h22v16H1z" fill="#777" stroke="#333" stroke-dasharray="3 1"/><path d="M0 6h6V3l7 5-7 5v-3H0z"/><circle cx="17" cy="7" r="2" fill="#fff"/><text x="4" y="18" class="m8 wt">stat</text></svg></button><button aria-label="Stat"><svg viewBox="0 0 24 24"><path d="M1 4h22v17H1z" fill="#777" stroke="#333" stroke-dasharray="3 1"/><circle cx="10" cy="8" r="2" fill="#fff"/><path d="M14 4h7v4h-7z" fill="#fff"/><text x="4" y="18" class="m8 wt">stat</text></svg></button></div>
    </div><footer>0 | Ladybug<i></i></footer></div>
    <div class="pn"><div class="ics">
      <div><button aria-label="Average"><svg viewBox="0 0 24 24"><path d="M1 12h5M10 10h5v5h-5z" fill="#111" stroke="#111" stroke-width="2"/><path d="M5 24V15M0 20l5-5 5 5M18 0v8M13 4l5 5 5-5" fill="none" stroke="#ec1c24" stroke-width="1.600"/><circle cx="5" cy="12" r="2.500" fill="#fff" stroke="#e22"/><circle cx="18" cy="12" r="2.500" fill="#fff" stroke="#e22"/></svg></button><button aria-label="Conditional"><svg viewBox="0 0 24 24"><text x="1" y="12" class="m12">010</text><text x="1" y="23" class="m12">100</text><ellipse cx="12" cy="12" rx="5" ry="11" fill="none" stroke="#e22" stroke-dasharray="3 1"/></svg></button></div>
      <div><button aria-label="Day month hour"><svg viewBox="0 0 24 24"><text x="2" y="16" class="m10">DMH</text><path d="M8 3v18M17 3v18" stroke="#111" stroke-dasharray="3 1"/></svg></button><button aria-label="Separate"><svg viewBox="0 0 24 24"><text x="2" y="11" class="m10">B</text><text x="14" y="11" class="m10">8</text><text x="2" y="22" class="m10">A</text><text x="14" y="22" class="m10">2</text><path d="M12 1v22" stroke="#e22" stroke-dasharray="3 1" stroke-width="2"/></svg></button></div><hr>
      <div><button aria-label="Wind and temperature"><svg viewBox="0 0 24 24"><path d="M4 3h16v17H4z" fill="#ddd" stroke="#555"/><path d="M8 1v10M15 1v18" stroke="#111"/><path d="M6 8h4v6a3 3 0 1 1-4 0z" fill="#29aae1" stroke="#111"/><path d="M13 4h4v11a3 3 0 1 1-4 0z" fill="#e22" stroke="#711"/></svg></button><button aria-label="Wind profile"><svg viewBox="0 0 24 24"><path d="M23 1q-2 18-21 21h21" fill="none" stroke="#333" stroke-width="1.500"/><path d="M1 9h11V6l6 5-6 5v-4H1z" fill="#00aeef"/></svg></button></div><hr>
      <div><button aria-label="Outdoor comfort"><svg viewBox="0 0 24 24"><path d="M1 1h22v22H1z" fill="#ccc" stroke="#000" stroke-width="1.500"/><use href="#therm" x="1" y="4" width="7" height="18"/><use href="#drop" x="5" y="1" width="9" height="9"/><circle cx="16" cy="6" r="2"/><path d="M16 8q6 2 4 6l-5 1 3 4-3 4" fill="none" stroke="#000" stroke-width="2.500"/></svg></button><button aria-label="Walking"><svg viewBox="0 0 24 24"><use href="#therm" x="1" y="4" width="7" height="18"/><use href="#drop" x="4" y="0" width="9" height="9"/><circle cx="20" cy="4" r="3" fill="#fd3" stroke="#a80"/><circle cx="14" cy="7" r="2"/><path d="M14 10v6l5 7M14 16l-4 7M9 15l5-4 5 4" fill="none" stroke="#000" stroke-width="2.500"/></svg></button></div>
      <div><button aria-label="Seated comfort"><svg viewBox="0 0 24 24"><path d="M1 1h22v22H1z" fill="#ccc" stroke="#000" stroke-width="1.500"/><use href="#therm" x="1" y="4" width="7" height="18"/><use href="#drop" x="4" y="1" width="9" height="9"/><circle cx="15" cy="7" r="2"/><path d="M15 10v6h6v6M10 18h9" fill="none" stroke="#000" stroke-width="2.500"/></svg></button><button aria-label="Climate"><svg viewBox="0 0 24 24"><circle cx="7" cy="7" r="5" fill="#fc2" stroke="#c80" stroke-width="2" stroke-dasharray="2 1"/><use href="#drop" x="13" y="0" width="11" height="12"/><path d="M11 11h3v3h3v3h-3v3h-3v-3H8v-3h3z" fill="#e22"/><path d="M5 15h3v7H5z" fill="#e22"/><path d="M14 18h4v-3l5 4-5 4v-3h-4z" fill="#28f"/></svg></button></div>
    </div><footer>1 | AnalyzeWeatherData<i></i></footer></div>
    <div class="pn"><div class="ics">
      <div><button aria-label="3D chart"><svg viewBox="0 0 24 24"><path d="M1 19l22-2M13 1v20M3 22l4-8" stroke="#222"/><path d="M3 10l8-5 10 5-4 8-6-3-7 4z" fill="#d98a8a" stroke="#446" fill-opacity=".85"/></svg></button><button aria-label="Adaptive chart"><svg viewBox="0 0 24 24"><path d="M1 1h22v22H1z" fill="#fff" stroke="#222"/><path d="M6 1v22M11 1v22M16 1v22M1 6h22M1 12h22M1 18h22" stroke="#bbb"/><path d="M1 15L23 4v9L1 23z" fill="#aac" fill-opacity=".6"/><path d="M1 17L23 6M1 21L23 10" stroke="#b01828" stroke-width="2"/><path d="M1 19L23 8" stroke="#111"/></svg></button></div>
      <div><button aria-label="Bell chart"><svg viewBox="0 0 24 24"><path d="M2 2v20h21" fill="none" stroke="#222"/><path d="M3 21q4-3 7-16 3-5 6 0 2 12 7 16z" fill="#c8324a" stroke="#224"/><path d="M5 21q4-3 6-9 2-3 4 0 2 6 6 9z" fill="#9cd0f0" stroke="#224"/></svg></button><button aria-label="Monthly chart"><svg viewBox="0 0 24 24"><path d="M2 2v20h21" fill="none" stroke="#222"/><path d="M3 7h6v14H3z" fill="#c8324a"/><path d="M10 12h6v9h-6z" fill="#2a62b0"/><path d="M17 2h5v19h-5z" fill="#9a86b0"/><path d="M3 14l8-3 5 4 6-5" fill="none" stroke="#222"/></svg></button></div>
      <div><button aria-label="Psychrometric"><svg viewBox="0 0 24 24"><path d="M1 21Q16 17 19 2h3v20z" fill="#ddd" stroke="#222"/><path d="M8 22v-4M13 22v-7M18 22V9M5 18l17-6M16 8h6" stroke="#333"/><path d="M10 15l8 3-4 2z" fill="#c66"/></svg></button></div><hr>
      <div><button aria-label="Sky dome"><svg viewBox="0 0 24 24"><circle cx="12" cy="12" r="10.500" fill="url(#hot)" stroke="#665"/></svg></button><button aria-label="Sun paths"><svg viewBox="0 0 24 24"><g fill="#ff0" stroke="#554"><circle cx="9" cy="11" r="8.500"/><circle cx="11" cy="11" r="8.500"/><circle cx="14" cy="11" r="8.500"/></g><path d="M15 14h8v8h-8z" fill="#fff"/><path d="M19 15v6M16 18h6" stroke="#000" stroke-width="1.500"/></svg></button></div>
      <div><button aria-label="Radiation rose"><svg viewBox="0 0 24 24"><circle cx="9" cy="12" r="9" fill="#29c" stroke="#444"/><circle cx="11" cy="12" r="8.500" fill="#fd4"/><circle cx="15" cy="11" r="8.500" fill="#f58220" stroke="#654"/><path d="M21 4l-6 6 3 3h-8V5l3 3 6-6z" fill="#fff"/></svg></button><button aria-label="Shade"><svg viewBox="0 0 24 24"><circle cx="18" cy="6" r="3.500" fill="#fe3" stroke="#a90" stroke-width="2" stroke-dasharray="2 1"/><path d="M15 9l-6 6M9 11v4h4" fill="none" stroke="#111" stroke-width="1.600"/><path d="M1 12l5-1 9 11H9z" fill="#ff0" stroke="#554"/></svg></button></div><hr>
      <div><button aria-label="Cool dome"><svg viewBox="0 0 24 24"><circle cx="12" cy="12" r="10" fill="url(#cool)" stroke="#887a50" stroke-width="1.500"/></svg></button><button aria-label="Seated sun"><svg viewBox="0 0 24 24"><circle cx="19" cy="4" r="3.500" fill="#e22" stroke="#500" stroke-dasharray="1 1" stroke-width="2"/><circle cx="5" cy="9" r="2"/><path d="M5 12v6h6v4M1 22h22" fill="none" stroke="#000" stroke-width="2"/><path d="M16 9l-6 6M10 11v4h4" fill="none" stroke="#e22" stroke-width="2"/></svg></button></div>
    </div><footer>2 | VisualizeWeatherData<i></i></footer></div>
    <div class="pn"><div class="ics">
      <div><button aria-label="Sun path"><svg viewBox="0 0 24 24"><circle cx="12" cy="12" r="9.500" fill="none" stroke="#111" stroke-width="3" stroke-dasharray="1 3"/><circle cx="12" cy="12" r="6" fill="#f9a63a" stroke="#642"/></svg></button><button aria-label="Sun hours"><svg viewBox="0 0 24 24"><use href="#sun"/><circle cx="12" cy="12" r="6" fill="#ff0"/><path d="M12 5v7h6" fill="none" stroke="#111" stroke-width="2"/></svg></button></div><hr>
      <div><button aria-label="Shadow"><svg viewBox="0 0 24 24"><path d="M0 19l7-4 6 5-6 3z"/><path d="M8 9l5-3 5 2v10l-5 4-5-3z" fill="#fff" stroke="#111"/><path d="M8 9l5 2 5-3M13 11v10" fill="none" stroke="#111"/><path d="M22 2l-5 4" stroke="#fd0" stroke-width="3"/></svg></button><button aria-label="View analysis"><svg viewBox="0 0 24 24"><path d="M1 12q11-13 22 0-11 11-22 0z" fill="#e22" stroke="#111"/><circle cx="12" cy="12" r="5" fill="#5ad" stroke="#111"/><circle cx="12" cy="12" r="2"/></svg></button></div>
      <div><button aria-label="Sun view"><svg viewBox="0 0 24 24"><use href="#sun"/><circle cx="12" cy="12" r="7" fill="#ff0"/><circle cx="12" cy="12" r="4" fill="#3ae" stroke="#036"/><circle cx="12" cy="12" r="1.500"/></svg></button><button aria-label="View rose"><svg viewBox="0 0 24 24"><path d="M12 12L3 5q9-8 18 0z" fill="#4bd"/><path d="M12 12l11-2v6z" fill="#e22"/><path d="M12 12l6 9H9z" fill="#3b5"/><path d="M12 12L1 9v7z" fill="#29c"/><path d="M12 1v22M1 12h22M4 4l16 16M20 4L4 20" stroke="#111" stroke-width=".8"/></svg></button></div><hr>
      <div><button aria-label="Orientation"><svg viewBox="0 0 24 24"><path d="M2 2h20v20H2z" fill="#f9a02c" stroke="#000" stroke-width="1.500" stroke-dasharray="3 2"/><path d="M3 4l13 7-13 9" fill="none" stroke="#660" stroke-width="5"/><path d="M3 4l13 7-13 9" fill="none" stroke="#ff0" stroke-width="3"/></svg></button><button aria-label="Viewer"><svg viewBox="0 0 24 24"><path d="M2 2l20 1 2 8H0z" fill="#dde" stroke="#222"/><path d="M4 7l17-2M7 3l-1 7M14 3l2 7" stroke="#c44"/><circle cx="12" cy="13" r="2"/><path d="M9 16h6v7H9z"/></svg></button></div>
      <div><button aria-label="Contours"><svg viewBox="0 0 24 24"><circle cx="12" cy="12" r="11"/><path d="M4 8l3-2 4 5 4-6 6 4-3 4 1 7-6-3-5 4-5-7 4-1z" fill="#ee1"/><path d="M9 8l5 8M14 8l-4 8" stroke="#000" stroke-dasharray="1 1"/></svg></button><button aria-label="Surface glare"><svg viewBox="0 0 24 24"><path d="M1 17l14-6 5 9-13 2z" fill="#f4a0a0" stroke="#844"/><circle cx="19" cy="5" r="3" fill="#e22" stroke="#500" stroke-dasharray="1 1" stroke-width="2"/><path d="M17 9l-5 5" stroke="#444" stroke-dasharray="2 1"/></svg></button></div>
    </div><footer>3 | EnvironmentalAnalysis<i></i></footer></div>
    <div class="pn"><div class="ics">
      <div><button aria-label="Photovoltaics"><svg viewBox="0 0 24 24"><path d="M4 1h16v22H4z" fill="#3b3fa0" stroke="#222"/><path d="M9 1v22M14 1v22M4 8h16M4 15h16" stroke="#668"/><path d="M11 3h6l-3 6h4L8 21l3-9H7z" fill="#fe0" stroke="#850"/></svg></button><button aria-label="Solar water"><svg viewBox="0 0 24 24"><path d="M4 15V7q0-5 6-5h6q5 0 5 8h-5q0-4-3-4-4 0-4 4v4" fill="#29a0d8" stroke="#045"/><circle cx="6" cy="17" r="4.500" fill="#fc2" stroke="#940" stroke-dasharray="2 1" stroke-width="2"/><use href="#flame" x="12" y="12" width="7" height="10"/><use href="#flame" x="17" y="12" width="7" height="10"/></svg></button></div><hr>
      <div><button aria-label="Plant power"><svg viewBox="0 0 24 24"><path d="M3 10h4v6l6-4v4l6-4v10H3z"/><path d="M4 0l5 1-2 3 2 0-6 5 1-4H2z" fill="#fd0" stroke="#a80"/><path d="M11 5h9v6h-9z" fill="#55b" stroke="#114"/></svg></button><button aria-label="Energy mix"><svg viewBox="0 0 24 24"><path d="M0 5l7-4h10l7 4-7 3H7z"/><text x="7" y="7" class="m8 wt">kw</text><path d="M7 10h5l-3 4h4l-9 9 2-6H2z" fill="#fe0" stroke="#850"/><use href="#flame" x="12" y="9" width="11" height="15"/></svg></button></div>
      <div><button aria-label="Sun glasses"><svg viewBox="0 0 24 24"><circle cx="12" cy="12" r="8.500" fill="#fb2" stroke="#c70" stroke-width="4" stroke-dasharray="2 2"/><circle cx="12" cy="12" r="8" fill="#fb2"/><path d="M3 9h18q0 5-4 5t-4-4h-2q0 4-4 4t-4-5z"/></svg></button><button aria-label="Tilt"><svg viewBox="0 0 24 24"><circle cx="7" cy="10" r="5" fill="#fc2" stroke="#c60"/><path d="M7 11l5-3 9 5-5 4z" fill="#44a" stroke="#113"/><path d="M1 13l6-3-2 5zM16 16l7 5M18 20l5 2-2-5M7 10l8-7" fill="#e22" stroke="#b11" stroke-width="1.500"/></svg></button></div><hr>
      <div><button aria-label="Tap"><svg viewBox="0 0 24 24"><path d="M0 9h10V5h5v4h4q3 1 3 6h-4q0-3-3-3H0z" fill="#789" stroke="#234"/><path d="M8 2h9M12 2v4" stroke="#234" stroke-width="2"/><path d="M6 15h3v7H6z" fill="#e22"/><use href="#drop" x="13" y="14" width="10" height="10"/></svg></button><button aria-label="Tank"><svg viewBox="0 0 24 24"><path d="M10 1h3v6h6v15H6V10h4z" fill="#9cf" stroke="#146"/><path d="M8 12h10v9H8z" fill="#fff"/><use href="#flame" x="8" y="10" width="10" height="11"/></svg></button></div>
      <div><button aria-label="House heat"><svg viewBox="0 0 24 24"><path d="M1 9l7-7 11 2 4 8-1 9-11 2-8-4z" fill="#4ab4e6" stroke="#124"/><use href="#flame" x="10" y="9" width="12" height="12"/></svg></button><button aria-label="Plant heat"><svg viewBox="0 0 24 24"><path d="M3 9h4v7l6-4v4l6-4v11H3z"/><circle cx="5" cy="4" r="3" fill="#e43"/><path d="M11 6h9v5h-9z" fill="#39c" stroke="#024"/></svg></button></div>
    </div><footer>4 | Renewables<i></i></footer></div>
    <div class="pn"><div class="ics">
      <div><button aria-label="Gradient"><svg viewBox="0 0 24 24"><path d="M1 2h22v19H1z" fill="url(#rain)" stroke="#555"/></svg></button><button aria-label="Legend"><svg viewBox="0 0 24 24"><path d="M1 2h6v5H1z" fill="#b22"/><path d="M1 7h6v5H1z" fill="#f84"/><path d="M1 12h6v5H1z" fill="#8bd"/><path d="M1 17h6v5H1z" fill="#27c"/><text x="11" y="22" class="p">P</text></svg></button></div>
      <div><button aria-label="Recolor"><svg viewBox="0 0 24 24"><path d="M1 1h14v8H1z" fill="#5c5"/><path d="M3 9h18v5H3z" fill="#fe6"/><path d="M4 14h19v8H4z" fill="#f77"/><path d="M18 7a7.500 7.500 0 1 0 2 7M20 1v8h-7" fill="none" stroke="#222" stroke-width="5"/><path d="M18 7a7.500 7.500 0 1 0 2 7M20 2v6h-6" fill="none" stroke="#fff" stroke-width="2.500"/></svg></button></div><hr>
      <div><button aria-label="Body"><svg viewBox="0 0 24 24"><circle cx="8" cy="4" r="2"/><path d="M8 7l-5 4 6 5-2 6" fill="none" stroke="#000" stroke-width="3"/><text x="12" y="22" class="p">P</text></svg></button><button aria-label="Metabolism"><svg viewBox="0 0 24 24"><circle cx="4" cy="4" r="2.500" fill="none" stroke="#b36" stroke-width="1.500"/><path d="M4 7v6M2 10h4" stroke="#b36"/><circle cx="4" cy="19" r="2.500" fill="none" stroke="#222" stroke-width="1.500"/><circle cx="13" cy="4" r="2"/><path d="M9 7h8v8h-2v8h-4v-8H9z" fill="#29b"/><path d="M11 14h4v9h-4z"/><path d="M21 2v20M19 2h4M19 22h4" stroke="#222" stroke-width="1.500"/></svg></button></div>
      <div><button aria-label="Seated"><svg viewBox="0 0 24 24"><circle cx="6" cy="3" r="2"/><path d="M6 7v8h6v7M1 12l4 4" fill="none" stroke="#000" stroke-width="3"/><text x="12" y="22" class="p">P</text></svg></button><button aria-label="Red sun"><svg viewBox="0 0 24 24"><circle cx="12" cy="12" r="9.500" fill="none" stroke="#111" stroke-width="3" stroke-dasharray="1 3"/><circle cx="12" cy="12" r="6" fill="#e22"/></svg></button></div><hr>
      <div><button aria-label="Capture"><svg viewBox="0 0 24 24"><path d="M2 2h20v20H2z" fill="#ccc" stroke="#e22" stroke-width="1.500" stroke-dasharray="2 1"/><path d="M4 8h16v10H4zM8 5h6v3H8z" fill="#fff"/><circle cx="12" cy="12" r="4" fill="#29c"/><circle cx="12" cy="12" r="2.500"/></svg></button><button aria-label="Images"><svg viewBox="0 0 24 24"><path d="M1 2h20v16H1z" fill="#8ad" stroke="#357"/><path d="M3 5h20v16H3z" fill="#29b6f0" stroke="#fff" stroke-width="1.500"/><path d="M4 20l6-8 4 5 3-4 5 7z" fill="#124"/><circle cx="9" cy="9" r="2" fill="#fe4"/></svg></button></div>
    </div><footer>5 | Extra<i></i></footer></div>
    <div class="pn"><div class="ics"><div><button aria-label="Dial up"><svg viewBox="0 0 24 24"><circle cx="11" cy="13" r="9.500" fill="#ddd" stroke="#111" stroke-width="1.500"/><path d="M2 13h18M11 4v18M5 7l12 12" stroke="#777"/><path d="M7 14l7-7-4-4 13-2-2 13-4-4-7 7z" fill="#e22"/></svg></button><button aria-label="Dial"><svg viewBox="0 0 24 24"><circle cx="11" cy="12" r="9.500" fill="#ddd" stroke="#111" stroke-width="1.500"/><path d="M2 12h18a9 9 0 0 1-18 0z" fill="#f9a02c"/><path d="M11 3v18M5 6l12 12M17 6L5 18M2 12h18" stroke="#444"/></svg></button></div></div><footer>6 | D...</footer></div>
    <div class="pn"><div class="ics"><div><button aria-label="Find location"><svg viewBox="0 0 24 24"><text x="1" y="10" class="m12">I</text><circle cx="15" cy="5" r="4" fill="#fff" stroke="#e22" stroke-width="1.500"/><path d="M18 8l4 4" stroke="#e22" stroke-width="2"/><text x="0" y="23" class="m12">N</text><text x="13" y="23" class="m12">Y</text></svg></button><button aria-label="Search"><svg viewBox="0 0 24 24"><circle cx="10" cy="9" r="7" fill="none" stroke="#111" stroke-width="3"/><path d="M15 14l7 8" stroke="#111" stroke-width="4"/></svg></button></div></div><footer>7 |...</footer></div>
  </div>
  <div class="g-bar">
    <button aria-label="Open file"><svg viewBox="0 0 24 24"><path d="M4 13V1h12l4 4v7" fill="#fff" stroke="#555"/><path d="M1 10l2-2h7l2 3h11v12H1z" fill="#63bf2c" stroke="#2c6a10"/><path d="M2 12h20v4H2z" fill="#a8e67c"/></svg></button>
    <button aria-label="Save file"><svg viewBox="0 0 24 24"><path d="M1 1h20l2 2v20H3l-2-2z" fill="#1f63c8" stroke="#0c2c70"/><path d="M5 2h14v9H5z" fill="#eee"/><path d="M7 5h10M7 8h10" stroke="#aaa"/><path d="M6 15h11v8H6z" fill="#ccc"/><path d="M8 17h4v5H8z" fill="#1f63c8"/></svg></button>
    <i class="sep"></i>
    <span class="combo"><select aria-label="Zoom"><option>118%</option></select><svg width="12" height="12"><path d="M2 4l4 4 4-4" fill="none" stroke="#555"/></svg></span>
    <button aria-label="Zoom extents"><svg viewBox="0 0 24 24"><path d="M1 8V1h7v3H4v4zM16 1h7v7h-3V4h-4zM1 16v7h7v-3H4v-4zM23 16v7h-7v-3h4v-4z" fill="#222" stroke="#222"/><path d="M9 9l6 6M15 9l-6 6" stroke="#222" stroke-width="2.500"/></svg></button><i class="ar"></i>
    <button aria-label="Preview"><svg viewBox="0 0 24 24"><path d="M1 12Q12-1 23 12 12 24 1 12z" fill="#fff" stroke="#222" stroke-width="1.600"/><circle cx="12" cy="12" r="6" fill="#48b4e0" stroke="#124"/><circle cx="12" cy="12" r="3"/><circle cx="13" cy="10" r="1.200" fill="#fff"/></svg></button><i class="ar"></i>
    <button aria-label="Sketch"><svg viewBox="0 0 24 24"><path d="M1 8q5-3 4 4-5 10 4 9" fill="none" stroke="#333" stroke-width="2"/><path d="M9 13L19 2l4 6-8 11-8 3z" fill="#e4343a" stroke="#711"/><path d="M9 14l6 5-8 3z" fill="#f5c890"/></svg></button>
    <span class="grow"></span>
    <button aria-label="No preview"><svg viewBox="0 0 24 24"><path d="M4 4l7-3 8 3-1 10H5z" fill="#ddd" stroke="#777"/><path d="M2 16q10-7 20 0-3 7-10 7T2 16z" fill="#333"/><path d="M2 16q10 6 20 0" fill="none" stroke="#aaa"/></svg></button>
    <button aria-label="Wire preview"><svg viewBox="0 0 24 24"><path d="M2 12L12 2l9 3 1 6-11 11-7-2z" fill="#fff" stroke="#222"/><ellipse cx="8" cy="16" rx="3" ry="4" transform="rotate(-45 8 16)" fill="none" stroke="#222"/><ellipse cx="16" cy="7" rx="3" ry="5" transform="rotate(-45 16 7)" fill="none" stroke="#222"/></svg></button>
    <button class="sel" aria-label="Shaded preview"><svg viewBox="0 0 24 24"><path d="M1 12L11 2q8-2 12 7L13 22q-9 2-12-10z" fill="#c4161c" stroke="#500"/><ellipse cx="17" cy="7" rx="4" ry="6" transform="rotate(-45 17 7)" fill="#8c0c10" stroke="#500"/></svg></button>
    <i class="sep"></i>
    <button aria-label="Selected preview"><svg viewBox="0 0 24 24"><path d="M1 1q6 3 4 20l17 2" fill="none" stroke="#222"/><path d="M7 5l7-3 8 4-1 9-8 6-7-2z" fill="#18a0a0" stroke="#044"/><ellipse cx="16" cy="8" rx="4" ry="5" fill="#0c7474" transform="rotate(-45 16 8)"/></svg></button>
    <button aria-label="Document preview"><svg viewBox="0 0 24 24"><path d="M1 14l6-7 12 12-6 3-8-1z" fill="#ddd" stroke="#666"/><path d="M8 6l6-5 7 3 2 6-5 7z" fill="#5cb426" stroke="#263"/><ellipse cx="17" cy="7" rx="3" ry="5" transform="rotate(-45 17 7)" fill="#2f7a12"/><path d="M2 3l19 18" stroke="#222" stroke-width="1.500"/></svg></button>
    <button aria-label="Mesh quality"><svg viewBox="0 0 24 24"><circle cx="12" cy="12" r="10" fill="#ddd" stroke="#444"/><path d="M12 2a10 10 0 0 0 0 20z" fill="#f09028" stroke="#840"/></svg></button>
    <i class="sep tight"></i>
    <button aria-label="Settings"><svg viewBox="0 0 24 24"><path d="M7 3l10-1 5 6v8l-6 6H8l-5-6-1-8z" fill="#5c9fe8" stroke="#124a90" stroke-width="1.500"/><path d="M7 5l9-1 2 5-7 4-7-3z" fill="#d4ebff"/></svg></button><i class="ar"></i>
  </div>
  <div class="canvas">
    <svg class="fill"><g transform="translate(-782 -210)">
      <path d="M782 210h3000v184H782z" fill="url(#hatch)"/><path d="M782 364h3000v30H782z" fill="url(#shade)"/>
      <path shape-rendering="crispEdges" stroke="#000" stroke-opacity=".15" d="M793.500 210v1400M969.500 210v1400M1146.500 210v1400M1322.500 210v1400M1498.500 210v1400M1675.500 210v1400M1851.500 210v1400M782 218.500h3000M782 276.500h3000M782 335.500h3000M782 453.500h3000M782 512.500h3000M782 570.500h3000M782 629.500h3000M782 688.500h3000M782 747.500h3000M782 806.500h3000M782 865.500h3000M782 923.500h3000M782 982.500h3000M782 1041.500h3000M782 1100.500h3000"/>
      <path d="M782 394.500h3000" stroke="#000"/>
      <g fill="none" stroke-width="7"><path d="M781 791C960 742 1200 717 1471 717" stroke="#8ccc48"/><path d="M1349 804C1410 804 1410 692 1471 692" stroke="url(#fade)"/></g>
      <g fill="none" stroke="#d4cfc8" stroke-width="2"><path d="M781 791C960 742 1200 717 1471 717M1349 804C1410 804 1410 692 1471 692"/></g>
      <g fill="none" stroke="#45433f" stroke-opacity=".85" stroke-width="3"><path d="M781 397C850 412 877 460 875 560C873 620 868 660 869 700C871 780 900 873 1036 873"/><path d="M781 866C880 858 920 803 1036 803"/><path d="M1000 991H1036"/></g>
      <g fill="none" stroke="#55534f" stroke-width="2"><path d="M781 829C900 829 920 825 1036 825M781 833C900 833 920 829 1036 829M781 851C900 851 920 848 1036 848M781 855C900 855 920 852 1036 852"/></g>
    </g></svg>

    <div class="tag tag-a">Honeybee_Read Annual Result I</div>
    <div class="node node-a">
      <div class="col in"><span>_illFilesAddress</span><span>_testPoints<svg class="yy" viewBox="0 0 16 16"><path d="M4 2v3l3 3v6h2V8l3-3V2M7 2v2h2V2" fill="none" stroke="#777" stroke-width="1.500"/></svg></span><span>ptsVectors_</span><span>occupancyFiles_</span><span>_DLAIllumThresholds_</span><span>lightingControlGroups_</span><span>SHDGroupI_Sensors_</span><span>SHDGroupII_Sensors_</span><span>_runIt</span></div>
      <div class="core"><b>readAnnualResultsI</b></div>
      <div class="col out"><span>DLA</span><span>UDLI_Less_100</span><span>UDLI_100_2000</span><span>UDLI_More_2000</span><span>CDA</span><span>sDA</span><span>annualProfiles</span><span>htmReport</span></div>
      <footer>VER 0.0.66<br>JUL_07_2020</footer>
    </div>
    <div class="toggle"><span>Toggle</span><button>True</button></div>

    <div class="tag tag-b">Ladybug_Recolor Mesh</div>
    <svg class="warn" viewBox="0 0 16 16"><use href="#note"/></svg>
    <div class="node node-b">
      <div class="col in"><span></span><span>_inputMesh</span><span>heightDomain_</span><span>lowBoundColor_</span><span>highBoundColor_</span><span>legendPar_</span><span>analysisTitle_</span><span>legendTitle_</span><span>bakeIt_</span><span>layerName_</span></div>
      <div class="core"><b>reColorMesh</b></div>
      <div class="col out"><span></span><span>newMesh</span><span>newLegend</span><span>legendBasePt</span><span>meshColors</span><span>legendColors</span></div>
      <footer>VER 0.0.69<br>JUL_07_2020</footer>
    </div>
    <svg class="compass" viewBox="0 0 56 48"><path d="M2 24l5-4 4 3v2l-4 3z"/><path d="M25 5a20 20 0 0 0 5 39" fill="none" stroke="#000" stroke-width="4"/><path d="M42 5l6 4" fill="none" stroke="#000" stroke-width="4"/><circle cx="33" cy="24" r="20" fill="url(#knob)" stroke="#333"/><circle cx="33" cy="24" r="18.500" fill="none" stroke="#fff" stroke-width="1.500"/><path d="M30 5h6l-3 6zM30 43h6l-3-6zM14 21v6l6-3zM52 21v6l-6-3z" fill="#fff"/></svg>
  </div>
  <footer class="g-status">1.0.0007</footer>
</section>

<ul class="tip"><li><svg><use href="#note"/></svg><span>1. length of the results [=78] is not equal to the number of mesh faces [=71] or mesh vertices[=72].</span></li><li><svg><use href="#note"/></svg><span>2. length of the results [=78] is not equal to the number of mesh faces [=7] or mesh vertices[=16].</span></li></ul>
</main>

<footer class="task">
  <button class="start" aria-label="Start"><svg width="16" height="16"><path d="M0 2l7-1v7H0zM8 1l8-1v8H8zM0 9h7v6l-7-1zM8 9h8v7l-8-1z" fill="#fff"/></svg></button>
  <label class="search"><svg width="18" height="18"><circle cx="11" cy="6" r="5" fill="none" stroke="#222" stroke-width="1.500"/><path d="M7 10l-6 7" stroke="#222" stroke-width="1.500"/></svg><input type="search" placeholder="Type here to search"></label>
  <button aria-label="Cortana"><svg viewBox="0 0 24 24"><circle cx="12" cy="12" r="7" fill="none" stroke="#fff" stroke-width="2"/></svg></button>
  <button aria-label="Task view"><svg viewBox="0 0 24 24"><path d="M5 8h9v8H5zM4 4h11M4 20h11M5 3v3M14 3v3M5 21v-3M14 21v-3M18 4v5M18 13v8" fill="none" stroke="#fff" stroke-width="1.300"/><path d="M17 9h3v4h-3z" fill="#fff"/></svg></button>
  <button aria-label="Edge"><svg viewBox="0 0 24 24"><circle cx="12" cy="12" r="11.500" fill="url(#edge)"/><path d="M1 10Q4 0 13 1q10 1 10.500 10-2 6-9 4 3-2 1-6-3-5-9-3-4 1-5.500 4z" fill="#38c878"/><path d="M9 14q0-4 4-6 4 3 1 7 3 4 8 2-5 6-10 3-3-2-3-6z" fill="#22333d"/><path d="M2 14Q4 7 12 8q-5 4-2 10 3 4 7 4Q6 25 2 14z" fill="#1766b8"/></svg></button>
  <button class="run" aria-label="Explorer"><svg viewBox="0 0 24 24"><path d="M1 3h8l2 2h11v16H1z" fill="#e8a820"/><path d="M1 8h21v13H1z" fill="#ffd766"/><path d="M5 14h13v8h-4v-4H9v4H5z" fill="#3d97dd"/></svg></button>
  <button class="run" aria-label="Chrome"><svg viewBox="0 0 24 24"><circle cx="11" cy="11" r="10.500" fill="#dd4436"/><path d="M11 11L2 6a10.500 10.500 0 0 0 8 15.500z" fill="#1fa15d"/><path d="M11 11h10.500A10.500 10.500 0 0 1 10 21.500z" fill="#fdcf35"/><circle cx="11" cy="11" r="5" fill="#fff"/><circle cx="11" cy="11" r="4" fill="#4a8af4"/><circle cx="17" cy="17" r="7" fill="#a94fc0"/><text x="15" y="21" class="f">f</text></svg></button>
  <button class="run" aria-label="Media player"><svg viewBox="0 0 24 24"><circle cx="11" cy="11" r="9" fill="#eee"/><path d="M11 2a9 9 0 0 1 8 5l-6 2z" fill="#e33"/><path d="M2 11a9 9 0 0 1 9-9v6z" fill="#f90"/><path d="M2 12a9 9 0 0 0 8 8l1-5z" fill="#3a5"/><circle cx="11" cy="11" r="6" fill="#1d78c8" stroke="#fff" stroke-width="1.500"/><path d="M9 7l6 4-6 4z" fill="#fff"/><path d="M13 15h8v6h-8z" fill="#f4c74c"/><path d="M15 15v-2q2-3 4 0v2" fill="none" stroke="#eee" stroke-width="1.500"/></svg></button>
  <button class="run act" aria-label="Rhinoceros"><svg viewBox="0 0 24 24"><use href="#logo"/><path d="M15 0h9v12h-6z" fill="#000"/><text x="18" y="9" class="f">7</text></svg></button>
  <span class="grow"></span>
  <div class="wx"><svg viewBox="0 0 24 24"><circle cx="11" cy="10" r="9" fill="#f9a11c"/><path d="M5 22a5 5 0 0 1 0-9q3-5 8-1 7-3 8 4 3 1 1 4-1 2-3 2z" fill="#cfe6fb"/></svg><span>71°F&nbsp; Partly sunny</span></div>
  <div class="tray">
    <svg viewBox="0 0 24 24"><path d="M6 15l6-6 6 6" fill="none" stroke="#fff" stroke-width="1.500"/></svg>
    <svg viewBox="0 0 24 24"><path d="M4 16a4 4 0 0 1 1-7q4-6 9-1 5 0 5 4v4z" fill="#b4b8bc"/><circle cx="17" cy="16" r="5" fill="#666"/><path d="M16 14v4M18 14v4" stroke="#fff"/></svg>
    <svg viewBox="0 0 24 24"><path d="M5 7l14-2v12l-14 2zM9 13q0-4 5-3M15 12q-1 3-5 3" fill="none" stroke="#fff" stroke-width="1.300"/><circle cx="18" cy="18" r="4" fill="#e81123"/></svg>
    <svg viewBox="0 0 24 24"><path d="M8 8h7v8H8zM15 11l3-2v6l-3-2M7 5q5-3 10 0M7 19q5 3 10 0" fill="none" stroke="#fff" stroke-width="1.300"/></svg>
    <svg viewBox="0 0 24 24"><path d="M5 19Q6 7 18 6M8 19q1-8 10-9M12 19q0-5 6-5M15 19q0-2 3-2" fill="none" stroke="#fff" stroke-width="1.300"/></svg>
    <svg viewBox="0 0 24 24"><path d="M3 10h3l4-4v12l-4-4H3zM13 9q2 3 0 6M16 7q4 5 0 10M19 5q5 7 0 14" fill="none" stroke="#fff" stroke-width="1.300"/></svg>
  </div>
  <div class="lang"><span lang="fa">فا</span><span>FA</span></div>
  <div class="clock"><span>04:00 ب.ظ</span><span>1401/01/15</span></div>
  <button class="note" aria-label="Notifications"><svg viewBox="0 0 28 28"><path d="M3 3h16v12h-9l-4 4v-4H3z" fill="#fff"/><path d="M6 7h10M6 10h10" stroke="#1f2d42"/><circle cx="18" cy="18" r="8" fill="#3c4248" stroke="#888"/><text x="15" y="22" class="f">5</text></svg></button>
</footer>
</body>
</html>
```
FILE: styles.css
```css
* { box-sizing: border-box; }
html, body { height: 100%; }
body { margin: 0; display: flex; flex-direction: column; overflow: hidden; font: 11px/16px "Noto Sans", "Open Sans", sans-serif; color: #222; }
button { font: inherit; color: inherit; background: none; border: 0; padding: 0; margin: 0; white-space: nowrap; }
svg { display: block; }
.defs { position: absolute; width: 0; height: 0; }
.fill { position: absolute; inset: 0; width: 100%; height: 100%; }
.grow { flex: 1; }
.desktop { flex: 1; position: relative; overflow: hidden; min-height: 0; }

/* Rhino window */
.rhino { height: 100%; display: flex; flex-direction: column; background: #ebecf0; }
.r-title { display: flex; align-items: center; gap: 5px; height: 24px; padding: 0 17px 0 2px; background: #fff; color: #999; }
.r-title .r-ctl { width: 110px; height: 16px; margin-left: auto; }
.i16 { width: 16px; height: 16px; }
.r-menu { display: flex; gap: 14px; height: 18px; padding: 0 7px; background: #fff; color: #666; align-items: center; }
.r-cmd { margin: 3px 0 0 3px; padding-left: 4px; border-left: 2px solid #c9cfe0; height: 49px; color: #000; }
.r-cmd pre { margin: 0; background: #fff; font: inherit; line-height: 15px; height: 30px; border-bottom: 1px solid #b8c4d8; }
.r-prompt { display: flex; background: #fff; height: 18px; align-items: center; font-weight: 700; }
.r-prompt input { flex: 1; border: 0; font: inherit; padding: 0 4px; height: 16px; background: none; }
.r-bar { border-top: 1px solid #cfd5e6; margin-top: 3px; padding: 4px 0 4px 7px; height: 60px; }
.r-tabs { display: flex; gap: 22px; height: 17px; border-bottom: 1px solid #b9c5dc; }
.r-tabs button { height: 17px; color: #333; flex: none; }
.r-tabs .on { border: 1px solid #b9c5dc; border-bottom-color: #ebecf0; border-radius: 6px 4px 0 0; margin-right: -11px; padding: 0 11px 0 9px; }
.r-tools { display: flex; height: 34px; overflow: hidden; }
.r-tools button, .r-side button { position: relative; width: 28px; height: 28px; flex: none; padding: 3px 2px 0; }
.r-tools button { padding-top: 2px; }
.r-tools > button > svg, .r-side > button > svg { width: 24px; height: 24px; }
.d::after { content: ""; position: absolute; right: 0; bottom: 0; width: 6px; height: 6px; background: #666; clip-path: polygon(100% 0, 100% 100%, 0 100%); }
.r-body { flex: 1; display: flex; min-height: 0; }
.r-side { width: 64px; border-top: 4px double #c9cfe0; display: grid; grid-template-columns: 28px 28px; grid-auto-rows: 28px; align-content: start; padding-top: 2px; }
.r-view { flex: 1; position: relative; background: #9da3ab; border: solid #b6bfd6; border-width: 1px 0 1px 1px; overflow: hidden; }
.r-dock { width: 80px; border-left: 1px solid #b9c5dc; background: #e6e8ee; }
.axis { font-size: 13px; fill: #666c74; }
.r-vp { position: relative; display: flex; align-items: center; gap: 8px; height: 18px; padding: 0 6px 0 7px; background: #869ce8; font-weight: 700; color: #1e2a50; }
.r-vp i { border: 4px solid transparent; border-top: 4px solid #111; border-bottom: 0; }
.r-vp span { border-right: 1px solid #222; padding-right: 7px; margin-right: -6px; }
.r-vtabs { display: flex; gap: 15px; padding: 0 0 2px 74px; height: 26px; align-items: center; }
.r-vtabs .on { align-self: start; height: 20px; margin: 0 -5px; padding: 3px 4px 0; border: 1px solid #b9c5dc; border-top: 0; border-radius: 0 0 4px 4px; }
.r-snap { display: flex; gap: 7px; height: 23px; margin: 0 3px; padding-left: 4px; border-left: 2px solid #c9cfe0; align-items: center; font-size: 11px; }
.r-snap label { display: flex; gap: 3px; align-items: center; }
.r-snap .off { margin-left: 3px; margin-right: 8px; }
.r-snap input { appearance: none; position: relative; width: 13px; height: 13px; margin: 0; border: 1px solid #333; background: #fff; }
.r-snap input:disabled { border-color: #aaa; background: #ddd; width: 11px; height: 11px; }
.r-snap input:checked::before { content: ""; position: absolute; left: 3px; top: 0; width: 4px; height: 8px; border: solid #222; border-width: 0 1px 1px 0; transform: rotate(40deg); }
.r-status { display: flex; height: 20px; border-top: 1px solid #b9c5dc; line-height: 20px; text-align: center; }
.r-status span { width: 88px; border-right: 1px solid #c3cbdd; }
.r-status .w49 { width: 50px; } .r-status .w66 { width: 66px; } .r-status .w44 { width: 44px; } .r-status .w47 { width: 47px; } .r-status .w48 { width: 48px; }
.r-status .on { background: #cdd6ee; font-weight: 700; }
.r-status .layer { width: 168px; display: flex; align-items: center; gap: 3px; padding-left: 4px; }
.layer i { width: 13px; height: 13px; background: #000; border: 1px solid #555; }

/* Grasshopper window */
.gh { position: absolute; left: 779px; right: 8px; top: 10px; bottom: -16px; display: flex; flex-direction: column; background: #f0f0f0; border: 1px solid #555; border-width: 1px 2px; box-shadow: 0 0 16px rgba(0, 0, 0, .4); color: #000; }
.g-title { display: flex; height: 30px; background: #fff; padding-left: 7px; align-items: center; }
.g-win { display: flex; margin-left: auto; }
.g-win button { width: 45px; height: 30px; display: grid; place-items: center; }
.g-menu { display: flex; gap: 20px; height: 27px; padding: 0 9px 0 12px; align-items: center; background: linear-gradient(90deg, #f0f0f0, #fcfcfc); }
.g-menu b { margin-left: auto; font-weight: 400; }
.g-tabs { display: flex; gap: 18px; height: 22px; padding-left: 7px; align-items: center; color: #6a6a6a; font-family: "Liberation Sans", Arial, sans-serif; }
.g-tabs button { height: 22px; }
.g-tabs .on { margin: 0 -8px; padding: 0 8px 3px; background: #fff; border: 1px solid #8a8a8a; border-bottom: 0; border-radius: 6px 6px 0 0; color: #000; align-self: end; }
.g-ribbon { display: flex; gap: 4px; height: 88px; padding: 2px 2px 0 0; margin: 0 1px; border: 1px solid #8a8a8a; border-width: 1px 1px 0 0; border-radius: 8px 8px 0 0; background: linear-gradient(#dedede, #f2f2f2 60%); align-items: start; }
.pn { border: 1px solid #555; border-radius: 4px; overflow: hidden; background: linear-gradient(#c8c8c8, #e6e6e6 60%, #d8d8d8); flex: none; }
.ics { display: flex; padding: 1px 1px 0; height: 58px; }
.ics button { display: block; width: 28px; height: 28px; padding: 2px; }
.ics button > svg { width: 24px; height: 24px; }
.ics hr { margin: 0 4px; border: 0; width: 2px; background: linear-gradient(90deg, #bbb 50%, #f5f5f5 50%); }
.pn footer { position: relative; height: 13px; line-height: 13px; text-align: center; color: #fff; background: linear-gradient(#3a3a3a, #111); width: 0; min-width: 100%; white-space: nowrap; overflow: hidden; font-family: "Liberation Sans", Arial, sans-serif; }
.pn footer i { position: absolute; right: 3px; top: 3px; width: 7px; height: 7px; background: linear-gradient(#aaa, #aaa) center/1px 7px no-repeat, linear-gradient(#aaa, #aaa) center/7px 1px no-repeat; }
.m6, .m8, .m10, .m12 { font-family: "Liberation Mono", monospace; font-weight: 700; }
.m6 { font-size: 6px; } .m8 { font-size: 8px; } .m10 { font-size: 11px; } .m12 { font-size: 12px; }
.wt { fill: #fff; }
.p { font: 700 16px "Liberation Serif", serif; fill: #fff; stroke: #111; stroke-width: 1px; }
.g-bar { display: flex; align-items: center; height: 32px; margin: 0 1px; border-top: 2px solid #666; background: linear-gradient(#fff, #f0f0f0); }
.g-bar button { width: 28px; height: 28px; padding: 3px; margin-right: 1px; flex: none; }
.g-bar button svg { width: 22px; height: 22px; }
.g-bar .sel { border: 1px solid #0078d7; padding: 2px; }
.g-bar .sep { width: 1px; height: 21px; background: #c0c0c0; margin: 0 7px; }
.g-bar .tight { margin: 0 1px; }
.g-bar > .ar { border: 3px solid transparent; border-top-color: #000; border-bottom: 0; margin: 0 5px 0 0; }
.combo { position: relative; width: 135px; height: 23px; margin: 0 4px 0 -4px; }
.combo select { appearance: none; width: 100%; height: 100%; border: 1px solid #7a7a7a; background: #fff; font: inherit; padding: 0 3px; color: #000; }
.combo svg { position: absolute; right: 3px; top: 6px; }
.canvas { flex: 1; position: relative; overflow: hidden; background: #d4cfc8; border: 1px solid #fff; border-width: 0 2px 1px 0; margin-left: 1px; }
.g-status { height: 29px; border-top: 1px solid #ccc; padding: 4px 31px 0; text-align: right; color: #777; }

/* nodes on the canvas */
.tag { position: absolute; height: 21px; border: 2px solid #333; background: linear-gradient(#fff, #ddd); text-align: center; font-size: 12px; line-height: 16px; white-space: nowrap; }
.tag::after { content: ""; position: absolute; left: 50%; bottom: -6px; width: 8px; height: 8px; margin-left: -4px; background: #ddd; border: solid #333; border-width: 0 1px 1px 0; transform: rotate(45deg); }
.tag-a { left: 310px; top: 540px; width: 193px; }
.tag-b { left: 734px; top: 429px; width: 145px; }
.node { position: absolute; display: flex; border: 1px solid #333; border-radius: 5px; padding: 2px; font-size: 12px; box-shadow: 0 0 0 1px rgba(0, 0, 0, .25); }
.node-a { left: 254px; top: 578px; width: 308px; height: 217px; background: linear-gradient(#dcdce4, #bdbcca 10px, #aaa9b8 11px, #868493); }
.node-b { left: 689px; top: 468px; width: 237px; height: 240px; background: linear-gradient(#dcf020, #b8cc00); border-color: #1c4a1c; }
.col { display: flex; flex-direction: column; }
.col span { position: relative; flex: 1; display: flex; align-items: center; }
.in { text-align: right; }
.in span { justify-content: flex-end; padding-right: 5px; }
.out { flex: 1; }
.out span { padding-left: 4px; }
.node-a .in { width: 162px; }
.node-b .in { width: 109px; }
.in span::before, .out span::before { content: ""; position: absolute; width: 7px; height: 12px; background: #fff; border: 2px solid #000; top: calc(50% - 7px); }
.in span::before { left: -9px; border-radius: 7px 0 0 7px; border-right: 0; }
.out span::before { right: -9px; border-radius: 0 7px 7px 0; border-left: 0; }
.core { width: 30px; border: 1px solid #000; border-radius: 4px; background: linear-gradient(#777, #4c4c4c 8px, #303030); display: grid; place-items: center; color: #fff; font-size: 15px; }
.core b { writing-mode: vertical-rl; rotate: 180deg; }
.node-b .core { background: linear-gradient(#3a663c, #1b3d1b); color: #a8f0a0; border-color: #1c4a1c; }
.node footer { position: absolute; top: 100%; left: 5px; right: 5px; height: 35px; padding-top: 1px; background: #222; color: #ddd; border-radius: 0 0 4px 4px; text-align: center; font-size: 12px; line-height: 16px; }
.node-b footer { background: #003000; color: #a8e8a0; }
.yy { position: absolute; left: 1px; top: 4px; width: 16px; height: 16px; border: 1px solid #555; border-radius: 2px; background: #ddd; }
.toggle { position: absolute; left: 91px; top: 768px; width: 123px; height: 27px; display: flex; border: 2px solid #444; border-radius: 4px; background: linear-gradient(#dcdce4, #bdbcca 9px, #a3a2b0 10px, #8f8e9c); font-size: 12px; align-items: center; padding: 1px 0 1px 10px; }
.toggle::after { content: ""; position: absolute; right: -7px; top: 6px; width: 7px; height: 12px; border: 2px solid #000; border-left: 0; border-radius: 0 7px 7px 0; background: #fff; }
.toggle button { margin-left: auto; width: 56px; height: 21px; border: 2px solid #111; border-radius: 2px; background: linear-gradient(#666, #333); color: #ddd; font: 15px/16px "Liberation Mono", monospace; }
.warn { position: absolute; left: 907px; top: 451px; width: 18px; height: 18px; }
.compass { position: absolute; right: 6px; bottom: 6px; width: 56px; height: 48px; }
.tip { position: absolute; left: 1327px; right: 0; top: 670px; height: 48px; margin: 0; padding: 1px 0 0 5px; list-style: none; background: #fff; border: solid #777; border-width: 1px 0 1px 1px; color: #000; box-shadow: 2px 3px 4px rgba(0, 0, 0, .4); }
.tip li { display: flex; gap: 14px; height: 22px; align-items: center; white-space: nowrap; }
.tip svg { width: 16px; height: 16px; flex: none; }

/* taskbar */
.task { height: 40px; flex: none; display: flex; align-items: center; background: linear-gradient(90deg, #22353e, #1f2f3d 60%, #1f2c48 85%); color: #fff; position: relative; }
.task > button { width: 49px; height: 40px; display: grid; place-items: center; flex: none; }
.task > button svg { width: 24px; height: 24px; }
.task > .start svg { width: 16px; height: 16px; }
.search { display: flex; align-items: center; gap: 8px; width: 343px; height: 40px; padding-left: 12px; background: #f2f2f2; border: 1px solid #bbb; }
.search input { flex: 1; min-width: 0; border: 0; background: none; font: 14px/20px "Noto Sans", sans-serif; padding: 0; }
.search input::placeholder { color: #333; }
.task > .run { border: solid transparent; border-width: 0 4px; background: linear-gradient(#76b9ed, #76b9ed) bottom/100% 2px no-repeat; background-clip: padding-box; padding-top: 0; }
.task > .act { border: 0; background: linear-gradient(#76b9ed, #76b9ed) bottom/100% 2px no-repeat #4d5d66; }
.f { font: 9px "Noto Sans", sans-serif; fill: #fff; }
.wx { display: flex; align-items: center; gap: 9px; font-size: 13px; margin-right: 10px; }
.wx svg { width: 22px; height: 22px; }
.tray { display: flex; margin-right: 6px; }
.tray svg { width: 24px; height: 24px; }
.lang, .clock { display: flex; flex-direction: column; text-align: center; line-height: 18px; }
.lang { width: 36px; }
.clock { width: 74px; }
.task > .note { width: 42px; }
.task > .note svg { width: 28px; height: 28px; }
.note .f { font-size: 11px; }
```
